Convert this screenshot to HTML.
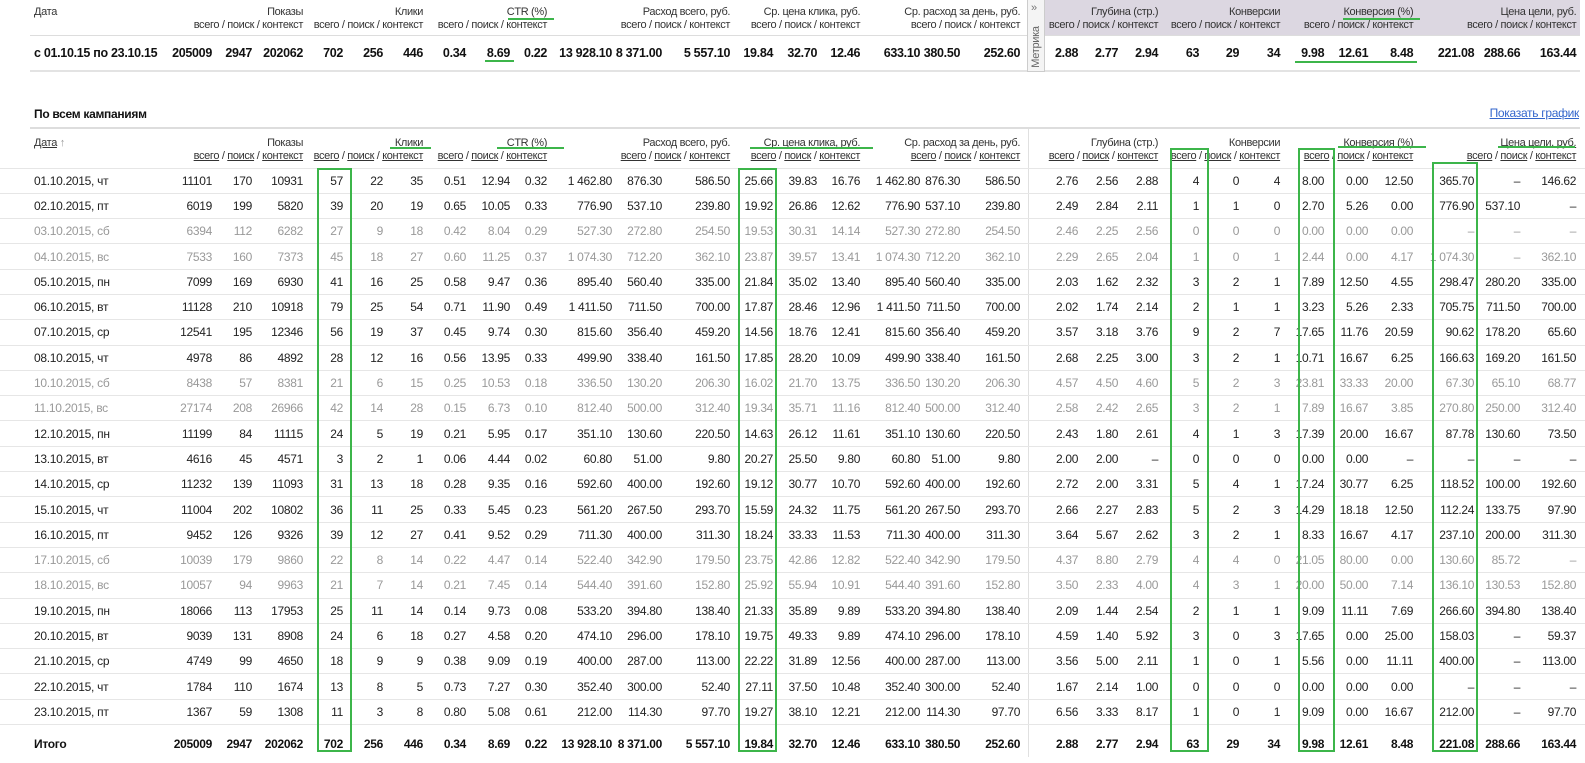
<!DOCTYPE html>
<html><head><meta charset="utf-8"><style>
*{margin:0;padding:0;box-sizing:border-box}
body{width:1585px;height:757px;overflow:hidden;background:#fff;font-family:"Liberation Sans",Arial,sans-serif;font-size:12px;letter-spacing:-0.3px;color:#222;position:relative}
table{border-collapse:collapse;table-layout:fixed;position:absolute;left:0;width:1585px}
td{text-align:right;white-space:nowrap;padding:0;overflow:visible}
td.l{text-align:left;padding-left:34px}
#top{top:0}
#top tr.h td{height:35px;vertical-align:top;line-height:13px;padding-top:6px;font-size:11px;letter-spacing:-0.35px;color:#333}
#top tr.s td{height:35px;font-weight:bold;font-size:12.5px;color:#111}
#bot{top:129px}
#bot tr.h td{height:39px;vertical-align:top;font-size:11px;letter-spacing:-0.35px;color:#333;line-height:13px;padding-top:8px}
#bot tr.r td{height:25.3px;border-top:1px solid #e6e6e6}
#bot tr.g td{color:#999}
#bot tr.t td{height:38px;font-weight:bold;border-top:1px solid #e6e6e6;color:#111}
.u{text-decoration:underline}
.abs{position:absolute}
.gb{position:absolute;border:2px solid #3cb54a}
.gl{position:absolute;height:2px;background:#3cb54a}
</style></head><body>
<div class="abs" style="left:1045px;top:0;width:535px;height:35px;background:#dcd7e1"></div>
<div class="abs" style="left:30px;top:35px;width:1550px;height:1px;background:#ddd"></div>
<div class="abs" style="left:30px;top:70px;width:1550px;height:2px;background:#e3e3e3"></div>
<div class="abs" style="left:1027px;top:0;width:18px;height:72px;background:#f4f4f4;border:1px solid #ccc;border-top:none"></div>
<div class="abs" style="left:1031px;top:2px;font-size:11px;color:#777">»</div>
<div class="abs" style="left:1011px;top:41px;width:50px;font-size:11px;color:#666;transform:rotate(-90deg);text-align:center">Метрика</div>

<table id="top">
<colgroup><col style="width:150px"><col style="width:62px"><col style="width:40px"><col style="width:51px"><col style="width:40px"><col style="width:40px"><col style="width:40px"><col style="width:43px"><col style="width:44px"><col style="width:37px"><col style="width:65px"><col style="width:50px"><col style="width:68px"><col style="width:43px"><col style="width:44px"><col style="width:43px"><col style="width:60px"><col style="width:40px"><col style="width:60px"><col style="width:58px"><col style="width:40px"><col style="width:40px"><col style="width:41px"><col style="width:40px"><col style="width:41px"><col style="width:44px"><col style="width:44px"><col style="width:45px"><col style="width:61px"><col style="width:46px"><col style="width:56px"><col style="width:9px"></colgroup>
<tr class="h"><td class="l">Дата</td><td colspan="3">Показы<br>всего / поиск / контекст</td><td colspan="3">Клики<br>всего / поиск / контекст</td><td colspan="3">CTR (%)<br>всего / поиск / контекст</td><td colspan="3">Расход всего, руб.<br>всего / поиск / контекст</td><td colspan="3">Ср. цена клика, руб.<br>всего / поиск / контекст</td><td colspan="3">Ср. расход за день, руб.<br>всего / поиск / контекст</td><td colspan="3">Глубина (стр.)<br>всего / поиск / контекст</td><td colspan="3">Конверсии<br>всего / поиск / контекст</td><td colspan="3">Конверсия (%)<br>всего / поиск / контекст</td><td colspan="3">Цена цели, руб.<br>всего / поиск / контекст</td><td></td></tr>
<tr class="s"><td class="l">с 01.10.15 по 23.10.15</td><td>205009</td><td>2947</td><td>202062</td><td>702</td><td>256</td><td>446</td><td>0.34</td><td>8.69</td><td>0.22</td><td>13 928.10</td><td>8 371.00</td><td>5 557.10</td><td>19.84</td><td>32.70</td><td>12.46</td><td>633.10</td><td>380.50</td><td>252.60</td><td>2.88</td><td>2.77</td><td>2.94</td><td>63</td><td>29</td><td>34</td><td>9.98</td><td>12.61</td><td>8.48</td><td>221.08</td><td>288.66</td><td>163.44</td><td></td></tr>
</table>

<div class="abs" style="left:34px;top:107px;font-weight:bold;font-size:12px;color:#111">По всем кампаниям</div>
<div class="abs u" style="right:6px;top:106px;font-size:12px;color:#3366cc">Показать график</div>
<div class="abs" style="left:30px;top:127px;width:1550px;height:2px;background:#ddd"></div>
<div class="abs" style="left:1028px;top:129px;width:1px;height:628px;background:#e0e0e0"></div>

<table id="bot">
<colgroup><col style="width:150px"><col style="width:62px"><col style="width:40px"><col style="width:51px"><col style="width:40px"><col style="width:40px"><col style="width:40px"><col style="width:43px"><col style="width:44px"><col style="width:37px"><col style="width:65px"><col style="width:50px"><col style="width:68px"><col style="width:43px"><col style="width:44px"><col style="width:43px"><col style="width:60px"><col style="width:40px"><col style="width:60px"><col style="width:58px"><col style="width:40px"><col style="width:40px"><col style="width:41px"><col style="width:40px"><col style="width:41px"><col style="width:44px"><col style="width:44px"><col style="width:45px"><col style="width:61px"><col style="width:46px"><col style="width:56px"><col style="width:9px"></colgroup>
<tr class="h"><td class="l"><span class="u">Дата</span> <span style="color:#999">↑</span></td><td colspan="3">Показы<br><span class="u">всего</span> / <span class="u">поиск</span> / <span class="u">контекст</span></td><td colspan="3"><span class="u">Клики</span><br><span class="u">всего</span> / <span class="u">поиск</span> / <span class="u">контекст</span></td><td colspan="3"><span class="u">CTR (%)</span><br><span class="u">всего</span> / <span class="u">поиск</span> / <span class="u">контекст</span></td><td colspan="3">Расход всего, руб.<br><span class="u">всего</span> / <span class="u">поиск</span> / <span class="u">контекст</span></td><td colspan="3"><span class="u">Ср. цена клика, руб.</span><br><span class="u">всего</span> / <span class="u">поиск</span> / <span class="u">контекст</span></td><td colspan="3">Ср. расход за день, руб.<br><span class="u">всего</span> / <span class="u">поиск</span> / <span class="u">контекст</span></td><td colspan="3">Глубина (стр.)<br><span class="u">всего</span> / <span class="u">поиск</span> / <span class="u">контекст</span></td><td colspan="3">Конверсии<br><span class="u">всего</span> / <span class="u">поиск</span> / <span class="u">контекст</span></td><td colspan="3"><span class="u">Конверсия (%)</span><br><span class="u">всего</span> / <span class="u">поиск</span> / <span class="u">контекст</span></td><td colspan="3"><span class="u">Цена цели, руб.</span><br><span class="u">всего</span> / <span class="u">поиск</span> / <span class="u">контекст</span></td><td></td></tr>
<tr class="r"><td class="l">01.10.2015, чт</td><td>11101</td><td>170</td><td>10931</td><td>57</td><td>22</td><td>35</td><td>0.51</td><td>12.94</td><td>0.32</td><td>1 462.80</td><td>876.30</td><td>586.50</td><td>25.66</td><td>39.83</td><td>16.76</td><td>1 462.80</td><td>876.30</td><td>586.50</td><td>2.76</td><td>2.56</td><td>2.88</td><td>4</td><td>0</td><td>4</td><td>8.00</td><td>0.00</td><td>12.50</td><td>365.70</td><td>–</td><td>146.62</td><td></td></tr>
<tr class="r"><td class="l">02.10.2015, пт</td><td>6019</td><td>199</td><td>5820</td><td>39</td><td>20</td><td>19</td><td>0.65</td><td>10.05</td><td>0.33</td><td>776.90</td><td>537.10</td><td>239.80</td><td>19.92</td><td>26.86</td><td>12.62</td><td>776.90</td><td>537.10</td><td>239.80</td><td>2.49</td><td>2.84</td><td>2.11</td><td>1</td><td>1</td><td>0</td><td>2.70</td><td>5.26</td><td>0.00</td><td>776.90</td><td>537.10</td><td>–</td><td></td></tr>
<tr class="r g"><td class="l">03.10.2015, сб</td><td>6394</td><td>112</td><td>6282</td><td>27</td><td>9</td><td>18</td><td>0.42</td><td>8.04</td><td>0.29</td><td>527.30</td><td>272.80</td><td>254.50</td><td>19.53</td><td>30.31</td><td>14.14</td><td>527.30</td><td>272.80</td><td>254.50</td><td>2.46</td><td>2.25</td><td>2.56</td><td>0</td><td>0</td><td>0</td><td>0.00</td><td>0.00</td><td>0.00</td><td>–</td><td>–</td><td>–</td><td></td></tr>
<tr class="r g"><td class="l">04.10.2015, вс</td><td>7533</td><td>160</td><td>7373</td><td>45</td><td>18</td><td>27</td><td>0.60</td><td>11.25</td><td>0.37</td><td>1 074.30</td><td>712.20</td><td>362.10</td><td>23.87</td><td>39.57</td><td>13.41</td><td>1 074.30</td><td>712.20</td><td>362.10</td><td>2.29</td><td>2.65</td><td>2.04</td><td>1</td><td>0</td><td>1</td><td>2.44</td><td>0.00</td><td>4.17</td><td>1 074.30</td><td>–</td><td>362.10</td><td></td></tr>
<tr class="r"><td class="l">05.10.2015, пн</td><td>7099</td><td>169</td><td>6930</td><td>41</td><td>16</td><td>25</td><td>0.58</td><td>9.47</td><td>0.36</td><td>895.40</td><td>560.40</td><td>335.00</td><td>21.84</td><td>35.02</td><td>13.40</td><td>895.40</td><td>560.40</td><td>335.00</td><td>2.03</td><td>1.62</td><td>2.32</td><td>3</td><td>2</td><td>1</td><td>7.89</td><td>12.50</td><td>4.55</td><td>298.47</td><td>280.20</td><td>335.00</td><td></td></tr>
<tr class="r"><td class="l">06.10.2015, вт</td><td>11128</td><td>210</td><td>10918</td><td>79</td><td>25</td><td>54</td><td>0.71</td><td>11.90</td><td>0.49</td><td>1 411.50</td><td>711.50</td><td>700.00</td><td>17.87</td><td>28.46</td><td>12.96</td><td>1 411.50</td><td>711.50</td><td>700.00</td><td>2.02</td><td>1.74</td><td>2.14</td><td>2</td><td>1</td><td>1</td><td>3.23</td><td>5.26</td><td>2.33</td><td>705.75</td><td>711.50</td><td>700.00</td><td></td></tr>
<tr class="r"><td class="l">07.10.2015, ср</td><td>12541</td><td>195</td><td>12346</td><td>56</td><td>19</td><td>37</td><td>0.45</td><td>9.74</td><td>0.30</td><td>815.60</td><td>356.40</td><td>459.20</td><td>14.56</td><td>18.76</td><td>12.41</td><td>815.60</td><td>356.40</td><td>459.20</td><td>3.57</td><td>3.18</td><td>3.76</td><td>9</td><td>2</td><td>7</td><td>17.65</td><td>11.76</td><td>20.59</td><td>90.62</td><td>178.20</td><td>65.60</td><td></td></tr>
<tr class="r"><td class="l">08.10.2015, чт</td><td>4978</td><td>86</td><td>4892</td><td>28</td><td>12</td><td>16</td><td>0.56</td><td>13.95</td><td>0.33</td><td>499.90</td><td>338.40</td><td>161.50</td><td>17.85</td><td>28.20</td><td>10.09</td><td>499.90</td><td>338.40</td><td>161.50</td><td>2.68</td><td>2.25</td><td>3.00</td><td>3</td><td>2</td><td>1</td><td>10.71</td><td>16.67</td><td>6.25</td><td>166.63</td><td>169.20</td><td>161.50</td><td></td></tr>
<tr class="r g"><td class="l">10.10.2015, сб</td><td>8438</td><td>57</td><td>8381</td><td>21</td><td>6</td><td>15</td><td>0.25</td><td>10.53</td><td>0.18</td><td>336.50</td><td>130.20</td><td>206.30</td><td>16.02</td><td>21.70</td><td>13.75</td><td>336.50</td><td>130.20</td><td>206.30</td><td>4.57</td><td>4.50</td><td>4.60</td><td>5</td><td>2</td><td>3</td><td>23.81</td><td>33.33</td><td>20.00</td><td>67.30</td><td>65.10</td><td>68.77</td><td></td></tr>
<tr class="r g"><td class="l">11.10.2015, вс</td><td>27174</td><td>208</td><td>26966</td><td>42</td><td>14</td><td>28</td><td>0.15</td><td>6.73</td><td>0.10</td><td>812.40</td><td>500.00</td><td>312.40</td><td>19.34</td><td>35.71</td><td>11.16</td><td>812.40</td><td>500.00</td><td>312.40</td><td>2.58</td><td>2.42</td><td>2.65</td><td>3</td><td>2</td><td>1</td><td>7.89</td><td>16.67</td><td>3.85</td><td>270.80</td><td>250.00</td><td>312.40</td><td></td></tr>
<tr class="r"><td class="l">12.10.2015, пн</td><td>11199</td><td>84</td><td>11115</td><td>24</td><td>5</td><td>19</td><td>0.21</td><td>5.95</td><td>0.17</td><td>351.10</td><td>130.60</td><td>220.50</td><td>14.63</td><td>26.12</td><td>11.61</td><td>351.10</td><td>130.60</td><td>220.50</td><td>2.43</td><td>1.80</td><td>2.61</td><td>4</td><td>1</td><td>3</td><td>17.39</td><td>20.00</td><td>16.67</td><td>87.78</td><td>130.60</td><td>73.50</td><td></td></tr>
<tr class="r"><td class="l">13.10.2015, вт</td><td>4616</td><td>45</td><td>4571</td><td>3</td><td>2</td><td>1</td><td>0.06</td><td>4.44</td><td>0.02</td><td>60.80</td><td>51.00</td><td>9.80</td><td>20.27</td><td>25.50</td><td>9.80</td><td>60.80</td><td>51.00</td><td>9.80</td><td>2.00</td><td>2.00</td><td>–</td><td>0</td><td>0</td><td>0</td><td>0.00</td><td>0.00</td><td>–</td><td>–</td><td>–</td><td>–</td><td></td></tr>
<tr class="r"><td class="l">14.10.2015, ср</td><td>11232</td><td>139</td><td>11093</td><td>31</td><td>13</td><td>18</td><td>0.28</td><td>9.35</td><td>0.16</td><td>592.60</td><td>400.00</td><td>192.60</td><td>19.12</td><td>30.77</td><td>10.70</td><td>592.60</td><td>400.00</td><td>192.60</td><td>2.72</td><td>2.00</td><td>3.31</td><td>5</td><td>4</td><td>1</td><td>17.24</td><td>30.77</td><td>6.25</td><td>118.52</td><td>100.00</td><td>192.60</td><td></td></tr>
<tr class="r"><td class="l">15.10.2015, чт</td><td>11004</td><td>202</td><td>10802</td><td>36</td><td>11</td><td>25</td><td>0.33</td><td>5.45</td><td>0.23</td><td>561.20</td><td>267.50</td><td>293.70</td><td>15.59</td><td>24.32</td><td>11.75</td><td>561.20</td><td>267.50</td><td>293.70</td><td>2.66</td><td>2.27</td><td>2.83</td><td>5</td><td>2</td><td>3</td><td>14.29</td><td>18.18</td><td>12.50</td><td>112.24</td><td>133.75</td><td>97.90</td><td></td></tr>
<tr class="r"><td class="l">16.10.2015, пт</td><td>9452</td><td>126</td><td>9326</td><td>39</td><td>12</td><td>27</td><td>0.41</td><td>9.52</td><td>0.29</td><td>711.30</td><td>400.00</td><td>311.30</td><td>18.24</td><td>33.33</td><td>11.53</td><td>711.30</td><td>400.00</td><td>311.30</td><td>3.64</td><td>5.67</td><td>2.62</td><td>3</td><td>2</td><td>1</td><td>8.33</td><td>16.67</td><td>4.17</td><td>237.10</td><td>200.00</td><td>311.30</td><td></td></tr>
<tr class="r g"><td class="l">17.10.2015, сб</td><td>10039</td><td>179</td><td>9860</td><td>22</td><td>8</td><td>14</td><td>0.22</td><td>4.47</td><td>0.14</td><td>522.40</td><td>342.90</td><td>179.50</td><td>23.75</td><td>42.86</td><td>12.82</td><td>522.40</td><td>342.90</td><td>179.50</td><td>4.37</td><td>8.80</td><td>2.79</td><td>4</td><td>4</td><td>0</td><td>21.05</td><td>80.00</td><td>0.00</td><td>130.60</td><td>85.72</td><td>–</td><td></td></tr>
<tr class="r g"><td class="l">18.10.2015, вс</td><td>10057</td><td>94</td><td>9963</td><td>21</td><td>7</td><td>14</td><td>0.21</td><td>7.45</td><td>0.14</td><td>544.40</td><td>391.60</td><td>152.80</td><td>25.92</td><td>55.94</td><td>10.91</td><td>544.40</td><td>391.60</td><td>152.80</td><td>3.50</td><td>2.33</td><td>4.00</td><td>4</td><td>3</td><td>1</td><td>20.00</td><td>50.00</td><td>7.14</td><td>136.10</td><td>130.53</td><td>152.80</td><td></td></tr>
<tr class="r"><td class="l">19.10.2015, пн</td><td>18066</td><td>113</td><td>17953</td><td>25</td><td>11</td><td>14</td><td>0.14</td><td>9.73</td><td>0.08</td><td>533.20</td><td>394.80</td><td>138.40</td><td>21.33</td><td>35.89</td><td>9.89</td><td>533.20</td><td>394.80</td><td>138.40</td><td>2.09</td><td>1.44</td><td>2.54</td><td>2</td><td>1</td><td>1</td><td>9.09</td><td>11.11</td><td>7.69</td><td>266.60</td><td>394.80</td><td>138.40</td><td></td></tr>
<tr class="r"><td class="l">20.10.2015, вт</td><td>9039</td><td>131</td><td>8908</td><td>24</td><td>6</td><td>18</td><td>0.27</td><td>4.58</td><td>0.20</td><td>474.10</td><td>296.00</td><td>178.10</td><td>19.75</td><td>49.33</td><td>9.89</td><td>474.10</td><td>296.00</td><td>178.10</td><td>4.59</td><td>1.40</td><td>5.92</td><td>3</td><td>0</td><td>3</td><td>17.65</td><td>0.00</td><td>25.00</td><td>158.03</td><td>–</td><td>59.37</td><td></td></tr>
<tr class="r"><td class="l">21.10.2015, ср</td><td>4749</td><td>99</td><td>4650</td><td>18</td><td>9</td><td>9</td><td>0.38</td><td>9.09</td><td>0.19</td><td>400.00</td><td>287.00</td><td>113.00</td><td>22.22</td><td>31.89</td><td>12.56</td><td>400.00</td><td>287.00</td><td>113.00</td><td>3.56</td><td>5.00</td><td>2.11</td><td>1</td><td>0</td><td>1</td><td>5.56</td><td>0.00</td><td>11.11</td><td>400.00</td><td>–</td><td>113.00</td><td></td></tr>
<tr class="r"><td class="l">22.10.2015, чт</td><td>1784</td><td>110</td><td>1674</td><td>13</td><td>8</td><td>5</td><td>0.73</td><td>7.27</td><td>0.30</td><td>352.40</td><td>300.00</td><td>52.40</td><td>27.11</td><td>37.50</td><td>10.48</td><td>352.40</td><td>300.00</td><td>52.40</td><td>1.67</td><td>2.14</td><td>1.00</td><td>0</td><td>0</td><td>0</td><td>0.00</td><td>0.00</td><td>0.00</td><td>–</td><td>–</td><td>–</td><td></td></tr>
<tr class="r"><td class="l">23.10.2015, пт</td><td>1367</td><td>59</td><td>1308</td><td>11</td><td>3</td><td>8</td><td>0.80</td><td>5.08</td><td>0.61</td><td>212.00</td><td>114.30</td><td>97.70</td><td>19.27</td><td>38.10</td><td>12.21</td><td>212.00</td><td>114.30</td><td>97.70</td><td>6.56</td><td>3.33</td><td>8.17</td><td>1</td><td>0</td><td>1</td><td>9.09</td><td>0.00</td><td>16.67</td><td>212.00</td><td>–</td><td>97.70</td><td></td></tr>
<tr class="t"><td class="l">Итого</td><td>205009</td><td>2947</td><td>202062</td><td>702</td><td>256</td><td>446</td><td>0.34</td><td>8.69</td><td>0.22</td><td>13 928.10</td><td>8 371.00</td><td>5 557.10</td><td>19.84</td><td>32.70</td><td>12.46</td><td>633.10</td><td>380.50</td><td>252.60</td><td>2.88</td><td>2.77</td><td>2.94</td><td>63</td><td>29</td><td>34</td><td>9.98</td><td>12.61</td><td>8.48</td><td>221.08</td><td>288.66</td><td>163.44</td><td></td></tr>
</table>

<!-- green highlights -->
<div class="gl" style="left:508px;top:18px;width:46px"></div>
<div class="gl" style="left:485px;top:60px;width:29px"></div>
<div class="gl" style="left:1343px;top:18px;width:77px"></div>
<div class="gl" style="left:1295px;top:61px;width:122px"></div>
<div class="gl" style="left:390px;top:147px;width:41px"></div>
<div class="gl" style="left:497px;top:147px;width:67px"></div>
<div class="gl" style="left:750px;top:147px;width:123px"></div>
<div class="gl" style="left:1338px;top:146px;width:88px"></div>
<div class="gl" style="left:1498px;top:146px;width:77px"></div>
<div class="gb" style="left:317px;top:168px;width:35px;height:584px"></div>
<div class="gb" style="left:738px;top:168px;width:39px;height:584px"></div>
<div class="gb" style="left:1170px;top:148px;width:39px;height:604px"></div>
<div class="gb" style="left:1298px;top:148px;width:37px;height:604px"></div>
<div class="gb" style="left:1432px;top:162px;width:46px;height:590px"></div>
</body></html>
